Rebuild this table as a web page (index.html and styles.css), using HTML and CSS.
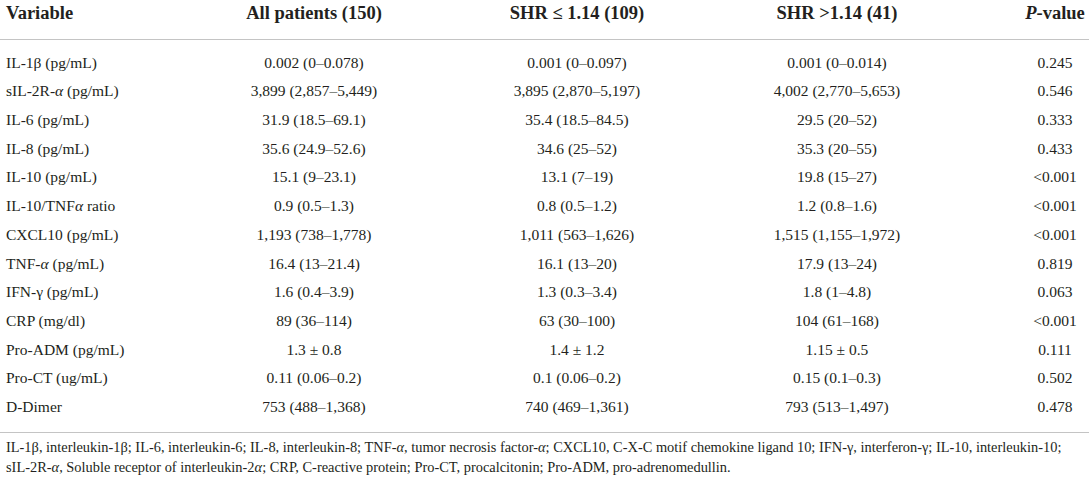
FILE: index.html
```html
<!DOCTYPE html>
<html lang="en">
<head>
<meta charset="utf-8">
<title>Table</title>
<link rel="stylesheet" href="styles.css">
</head>
<body>
<table class="data">
<colgroup>
<col class="c1"><col class="c2"><col class="c3"><col class="c4"><col class="c5">
</colgroup>
<thead>
<tr>
<th class="left">Variable</th>
<th>All patients (150)</th>
<th>SHR ≤ 1.14 (109)</th>
<th>SHR &gt;1.14 (41)</th>
<th><i>P</i>-value</th>
</tr>
</thead>
<tbody>
<tr class="first"><td class="left">IL-1β (pg/mL)</td><td>0.002 (0–0.078)</td><td>0.001 (0–0.097)</td><td>0.001 (0–0.014)</td><td>0.245</td></tr>
<tr><td class="left">sIL-2R-<i>α</i> (pg/mL)</td><td>3,899 (2,857–5,449)</td><td>3,895 (2,870–5,197)</td><td>4,002 (2,770–5,653)</td><td>0.546</td></tr>
<tr><td class="left">IL-6 (pg/mL)</td><td>31.9 (18.5–69.1)</td><td>35.4 (18.5–84.5)</td><td>29.5 (20–52)</td><td>0.333</td></tr>
<tr><td class="left">IL-8 (pg/mL)</td><td>35.6 (24.9–52.6)</td><td>34.6 (25–52)</td><td>35.3 (20–55)</td><td>0.433</td></tr>
<tr><td class="left">IL-10 (pg/mL)</td><td>15.1 (9–23.1)</td><td>13.1 (7–19)</td><td>19.8 (15–27)</td><td>&lt;0.001</td></tr>
<tr><td class="left">IL-10/TNF<i>α</i> ratio</td><td>0.9 (0.5–1.3)</td><td>0.8 (0.5–1.2)</td><td>1.2 (0.8–1.6)</td><td>&lt;0.001</td></tr>
<tr><td class="left">CXCL10 (pg/mL)</td><td>1,193 (738–1,778)</td><td>1,011 (563–1,626)</td><td>1,515 (1,155–1,972)</td><td>&lt;0.001</td></tr>
<tr><td class="left">TNF-<i>α</i> (pg/mL)</td><td>16.4 (13–21.4)</td><td>16.1 (13–20)</td><td>17.9 (13–24)</td><td>0.819</td></tr>
<tr><td class="left">IFN-γ (pg/mL)</td><td>1.6 (0.4–3.9)</td><td>1.3 (0.3–3.4)</td><td>1.8 (1–4.8)</td><td>0.063</td></tr>
<tr><td class="left">CRP (mg/dl)</td><td>89 (36–114)</td><td>63 (30–100)</td><td>104 (61–168)</td><td>&lt;0.001</td></tr>
<tr><td class="left">Pro-ADM (pg/mL)</td><td>1.3 ± 0.8</td><td>1.4 ± 1.2</td><td>1.15 ± 0.5</td><td>0.111</td></tr>
<tr><td class="left">Pro-CT (ug/mL)</td><td>0.11 (0.06–0.2)</td><td>0.1 (0.06–0.2)</td><td>0.15 (0.1–0.3)</td><td>0.502</td></tr>
<tr class="last"><td class="left">D-Dimer</td><td>753 (488–1,368)</td><td>740 (469–1,361)</td><td>793 (513–1,497)</td><td>0.478</td></tr>
</tbody>
</table>
<p class="note">IL-1β, interleukin-1β; IL-6, interleukin-6; IL-8, interleukin-8; TNF-<i>α</i>, tumor necrosis factor-<i>α</i>; CXCL10, C-X-C motif chemokine ligand 10; IFN-γ, interferon-γ; IL-10, interleukin-10; <span class="keep">sIL-2R-<i>α</i>,</span> Soluble receptor of interleukin-2<i>α</i>; CRP, C-reactive protein; Pro-CT, procalcitonin; Pro-ADM, pro-adrenomedullin.</p>
</body>
</html>
```

FILE: styles.css
```css
html, body {
  margin: 0;
  padding: 0;
  background: #ffffff;
}
body {
  font-family: "Liberation Serif", "Times New Roman", serif;
  color: #231f20;
  width: 1089px;
}
.data {
  width: 1089px;
  border-collapse: collapse;
  table-layout: fixed;
}
.c1 { width: 127px; }
.c2 { width: 374px; }
.c3 { width: 152px; }
.c4 { width: 368px; }
.c5 { width: 68px; }
.data th {
  font-size: 18.5px;
  font-weight: bold;
  line-height: 22px;
  padding: 1.5px 0 15.5px;
  text-align: center;
  white-space: nowrap;
  border-bottom: 1px solid #c4c4c4;
}
.data td {
  font-size: 15.5px;
  line-height: 20.7px;
  padding: 4px 0;
  text-align: center;
  white-space: nowrap;
}
.data .left {
  text-align: left;
  padding-left: 6px;
}
.data tr.first td {
  padding-top: 12.6px;
}
.data tr.last td {
  padding-bottom: 14px;
  border-bottom: 1px solid #c4c4c4;
}
.note {
  margin: 0;
  padding: 4px 6px 0;
  font-size: 14.4px;
  line-height: 20px;
}
.keep {
  white-space: nowrap;
}
```
